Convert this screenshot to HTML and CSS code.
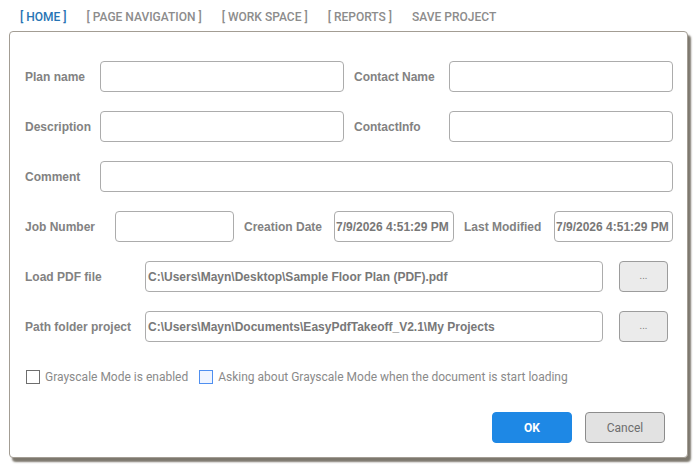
FILE: index.html
```html
<!DOCTYPE html>
<html>
<head>
<meta charset="utf-8">
<link rel="stylesheet" href="styles.css">
</head>
<body>
<nav class="nav">
  <span class="tab active">[ HOME ]</span>
  <span class="tab">[ PAGE NAVIGATION ]</span>
  <span class="tab">[ WORK SPACE ]</span>
  <span class="tab">[ REPORTS ]</span>
  <span class="tab">SAVE PROJECT</span>
</nav>
<div class="panel">
  <div class="rows">
    <div class="row">
      <label class="lbl w75">Plan name</label>
      <div class="field w244"></div>
      <label class="lbl w95 ml10">Contact Name</label>
      <div class="field grow"></div>
    </div>
    <div class="row">
      <label class="lbl w75">Description</label>
      <div class="field w244"></div>
      <label class="lbl w95 ml10">ContactInfo</label>
      <div class="field grow"></div>
    </div>
    <div class="row">
      <label class="lbl w75">Comment</label>
      <div class="field grow"></div>
    </div>
    <div class="row">
      <label class="lbl w90">Job Number</label>
      <div class="field w119"></div>
      <label class="lbl w90 ml10">Creation Date</label>
      <div class="field w120 date">7/9/2026 4:51:29 PM</div>
      <label class="lbl w90 ml10">Last Modified</label>
      <div class="field grow date">7/9/2026 4:51:29 PM</div>
    </div>
    <div class="row">
      <label class="lbl w120">Load PDF file</label>
      <div class="field w458 path">C:\Users\Mayn\Desktop\Sample Floor Plan (PDF).pdf</div>
      <button class="browse">...</button>
    </div>
    <div class="row">
      <label class="lbl w120">Path folder project</label>
      <div class="field w458 path">C:\Users\Mayn\Documents\EasyPdfTakeoff_V2.1\My Projects</div>
      <button class="browse">...</button>
    </div>
  </div>
  <div class="checks">
    <span class="box"></span><span class="ctext">Grayscale Mode is enabled</span>
    <span class="box blue"></span><span class="ctext">Asking about Grayscale Mode when the document is start loading</span>
  </div>
  <div class="actions">
    <button class="btn ok">OK</button>
    <button class="btn cancel">Cancel</button>
  </div>
</div>
</body>
</html>
```
FILE: styles.css
```css
* { box-sizing: border-box; }
html, body { margin: 0; padding: 0; background: #fff; }
body { width: 699px; height: 467px; overflow: hidden; font-family: Roboto, "Liberation Sans", sans-serif; }

.nav {
  height: 31px;
  display: flex;
  align-items: center;
  gap: 20px;
  padding: 2px 0 0 20px;
}
.tab {
  font-family: Roboto, sans-serif;
  font-weight: 500;
  font-size: 12px;
  color: #8c8c8c;
}
.tab.active { color: #2674b4; }

.panel {
  margin-left: 9px;
  width: 679px;
  height: 427px;
  border: 1px solid #a39d94;
  border-radius: 4px;
  box-shadow: 3px 4px 2px #7d786e;
  background: #fff;
  padding: 29px 14px 0 15px;
}

.rows { display: flex; flex-direction: column; gap: 19px; }
.row { display: flex; align-items: center; height: 31px; }

.lbl {
  font-family: "Liberation Sans", Arial, sans-serif;
  font-weight: bold;
  font-size: 12px;
  color: #828282;
  flex: none;
  white-space: nowrap;
  padding-top: 1px;
}
.w75 { width: 75px; }
.w90 { width: 90px; }
.w95 { width: 95px; }
.w120 { width: 120px; }
.ml10 { margin-left: 10px; }

.field {
  height: 31px;
  border: 1px solid #acacac;
  border-radius: 4px;
  background: #fff;
  flex: none;
  font-family: "Liberation Sans", Arial, sans-serif;
  font-weight: bold;
  font-size: 12px;
  color: #787878;
  display: flex;
  align-items: center;
  white-space: nowrap;
  overflow: hidden;
}
.field.grow { flex: 1; }
.w244 { width: 244px; }
.w119 { width: 119px; }
.w458 { width: 458px; }
.date { padding-left: 1px; }
.path { padding-left: 2px; }

.browse {
  margin-left: 16px;
  width: 49px;
  height: 31px;
  border: 1px solid #9c9c9c;
  border-radius: 4px;
  background: #ebebeb;
  color: #7e7e7e;
  font-family: Roboto, sans-serif;
  font-size: 10px;
  padding: 0 0 2px 0;
}

.checks {
  display: flex;
  align-items: center;
  margin-top: 27px;
  height: 15px;
  padding-left: 1px;
}
.box {
  width: 14px;
  height: 14px;
  border: 1px solid #6e6e6e;
  background: #fff;
  flex: none;
}
.box.blue { border-color: #4f8ff0; background: #f0f5ff; }
.ctext {
  font-family: Roboto, sans-serif;
  font-size: 12px;
  color: #8a8a8a;
  margin-left: 5px;
  margin-right: 11px;
}

.actions {
  display: flex;
  justify-content: flex-end;
  gap: 13px;
  margin-top: 28px;
  padding-right: 8px;
}
.btn {
  width: 80px;
  height: 31px;
  border-radius: 4px;
  font-family: Roboto, sans-serif;
  font-size: 12px;
}
.ok {
  background: #1e88e5;
  border: 1px solid #1e88e5;
  color: #fff;
  font-weight: bold;
}
.cancel {
  background: #e2e2e2;
  border: 1px solid #8c8c8c;
  color: #6e6e6e;
}
```
